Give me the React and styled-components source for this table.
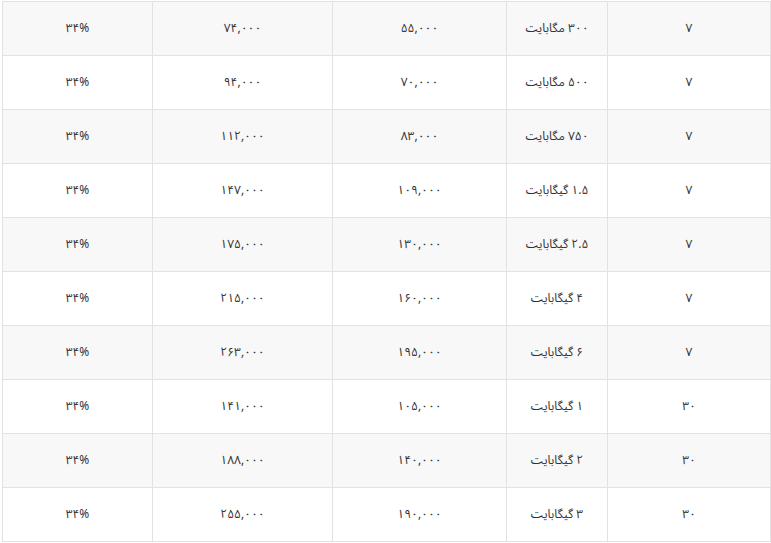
import styled, { createGlobalStyle } from "styled-components";

const GlobalStyle = createGlobalStyle`
  html, body {
    margin: 0;
    padding: 0;
    background: #fff;
  }
`;

const rows = [
  ["۷", "۳۰۰ مگابایت", "۵۵,۰۰۰", "۷۴,۰۰۰", "۳۴%"],
  ["۷", "۵۰۰ مگابایت", "۷۰,۰۰۰", "۹۴,۰۰۰", "۳۴%"],
  ["۷", "۷۵۰ مگابایت", "۸۳,۰۰۰", "۱۱۲,۰۰۰", "۳۴%"],
  ["۷", "۱.۵ گیگابایت", "۱۰۹,۰۰۰", "۱۴۷,۰۰۰", "۳۴%"],
  ["۷", "۲.۵ گیگابایت", "۱۳۰,۰۰۰", "۱۷۵,۰۰۰", "۳۴%"],
  ["۷", "۴ گیگابایت", "۱۶۰,۰۰۰", "۲۱۵,۰۰۰", "۳۴%"],
  ["۷", "۶ گیگابایت", "۱۹۵,۰۰۰", "۲۶۳,۰۰۰", "۳۴%"],
  ["۳۰", "۱ گیگابایت", "۱۰۵,۰۰۰", "۱۴۱,۰۰۰", "۳۴%"],
  ["۳۰", "۲ گیگابایت", "۱۴۰,۰۰۰", "۱۸۸,۰۰۰", "۳۴%"],
  ["۳۰", "۳ گیگابایت", "۱۹۰,۰۰۰", "۲۵۵,۰۰۰", "۳۴%"],
];

const widths = [163, 101, 174, 180, 150];

export default function App() {
  return (
    <>
      <GlobalStyle />
      <Wrap>
        <Table>
          <colgroup>
            {widths.map((w, i) => (
              <col key={i} style={{ width: w }} />
            ))}
          </colgroup>
          <tbody>
            {rows.map((row, idx) => (
              <Row key={idx} $striped={idx % 2 === 0}>
                {row.map((cell, i) => (
                  <Cell key={i}>{cell}</Cell>
                ))}
              </Row>
            ))}
          </tbody>
        </Table>
      </Wrap>
    </>
  );
}

const Wrap = styled.div`
  padding: 1px 0 0 2px;
  direction: rtl;
`;

const Table = styled.table`
  width: 768px;
  table-layout: fixed;
  border-collapse: collapse;
  font-family: "Noto Sans Arabic", "DejaVu Sans", sans-serif;
  font-size: 12px;
  color: #333;
`;

const Row = styled.tr`
  background-color: ${({ $striped }) => ($striped ? "#f8f8f8" : "#fff")};
`;

const Cell = styled.td`
  height: 53px;
  padding: 0 8px;
  text-align: center;
  vertical-align: middle;
  border: 1px solid #e2e2e2;
`;
